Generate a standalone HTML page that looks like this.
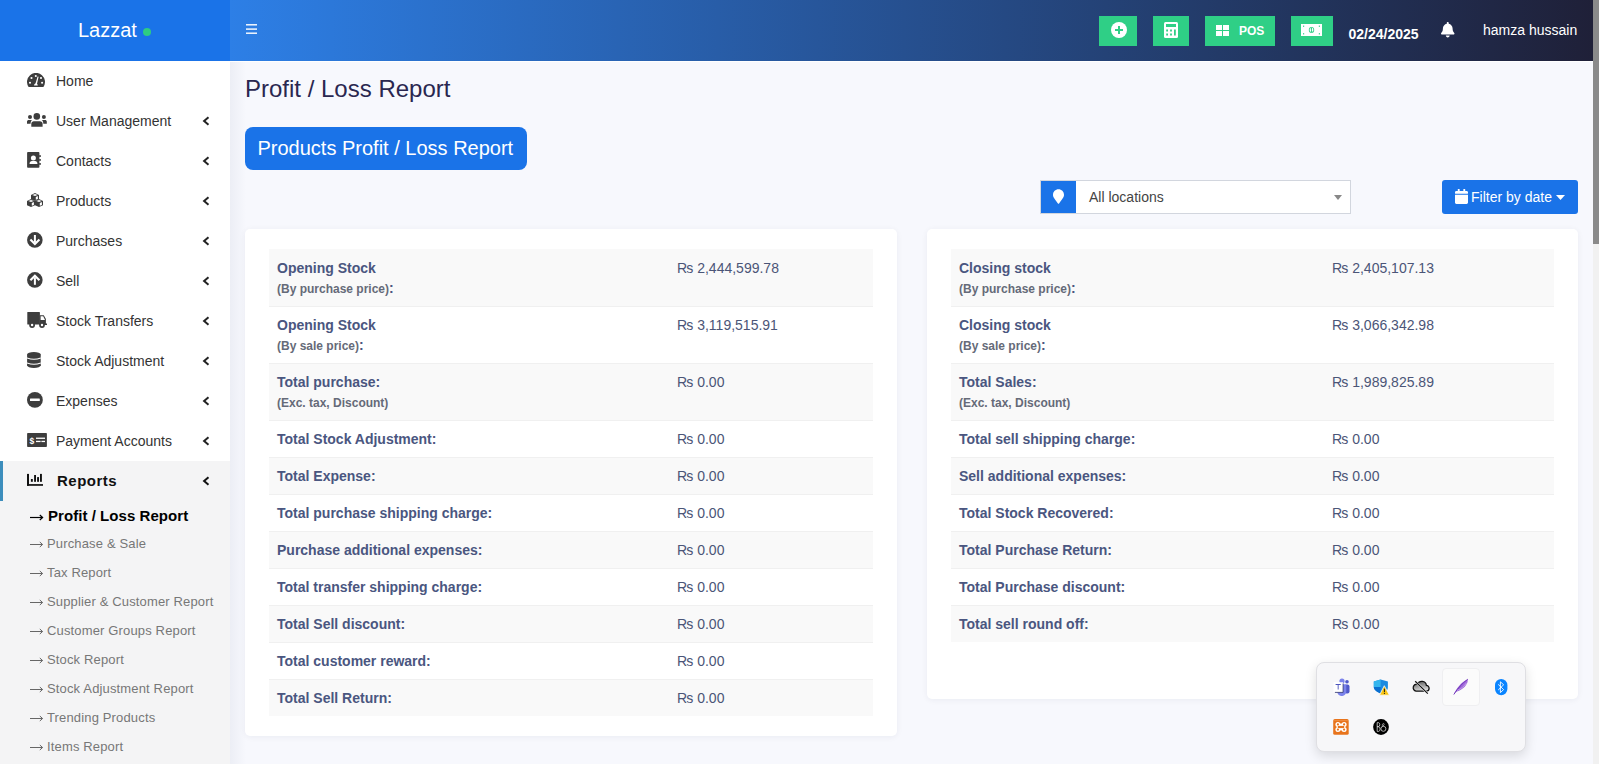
<!DOCTYPE html>
<html><head><meta charset="utf-8">
<style>
*{box-sizing:border-box;margin:0;padding:0}
html,body{width:1599px;height:764px;overflow:hidden;background:#f7f8fd;font-family:"Liberation Sans",sans-serif}
.a{position:absolute}
#logo{left:0;top:0;width:230px;height:61px;background:#1a73e8}
#nav{left:230px;top:0;width:1363px;height:61px;background:linear-gradient(to right,#2d7fe6,#1f2038)}
#wline{left:0;top:61px;width:1593px;height:1px;background:#fff}
#side{left:0;top:62px;width:230px;height:703px;background:#fff}
#shadow{left:230px;top:62px;width:16px;height:702px;background:linear-gradient(to right,#eceef5,rgba(247,248,253,0))}
.gbtn{background:#2fcf86;top:16px;height:30px}
.mi{left:56px;height:40px;line-height:40px;font-size:14px;color:#333;white-space:nowrap}
.ic{left:27px}
.chev{left:203px}
.sub{left:30px;font-size:13px;line-height:20px;color:#777;white-space:nowrap}
#sb{left:1593px;top:0;width:6px;height:764px;background:#f1f1f1}
#thumb{left:1593px;top:0;width:6px;height:244px;background:#8a8a8a}
.card{background:#fff;border-radius:5px;box-shadow:0 1px 6px rgba(20,30,60,.06)}
.row{height:37px}
.row.g{background:#f9f9f9}
.lbl{font-size:14px;font-weight:bold;color:#4a5680;line-height:20px;white-space:nowrap}
.val{font-size:14px;color:#4b5577;line-height:20px;white-space:nowrap}
.bd{border-top:1px solid #f0f0f0}
</style></head><body>
<div class="a" id="logo"></div>
<div class="a" style="left:78px;top:18px;font-size:20px;line-height:24px;color:#fff">Lazzat</div>
<div class="a" style="left:143px;top:28px;width:8px;height:8px;border-radius:50%;background:#2ecc82"></div>
<div class="a" id="nav"></div>
<div class="a" id="wline"></div>
<div class="a" id="side"></div>
<div class="a" id="shadow"></div>

<!-- hamburger -->
<svg class="a" style="left:246px;top:23px" width="12" height="12"><rect x="0" y="1.1" width="11" height="1.4" fill="#fff"/><rect x="0" y="5.4" width="11" height="1.4" fill="#fff"/><rect x="0" y="9.5" width="11" height="1.4" fill="#fff"/></svg>

<!-- header buttons -->
<div class="a gbtn" style="left:1099px;width:38px"></div>
<svg class="a" style="left:1110.5px;top:22px" width="16" height="16" viewBox="0 0 16 16"><circle cx="8" cy="8" r="8" fill="#fff"/><rect x="4" y="7" width="8" height="2" fill="#2fcf86"/><rect x="7" y="4" width="2" height="8" fill="#2fcf86"/></svg>
<div class="a gbtn" style="left:1153px;width:36px"></div>
<svg class="a" style="left:1164px;top:22px" width="14" height="16" viewBox="0 0 14 16"><rect x="0" y="0" width="14" height="16" rx="1.5" fill="#fff"/><rect x="2" y="2" width="10" height="3" fill="#2fcf86"/><rect x="2.2" y="7.5" width="1.8" height="2" fill="#2fcf86"/><rect x="6.1" y="7.5" width="1.8" height="2" fill="#2fcf86"/><rect x="2.2" y="11.5" width="1.8" height="2" fill="#2fcf86"/><rect x="6.1" y="11.5" width="1.8" height="2" fill="#2fcf86"/><rect x="10" y="7.5" width="1.8" height="6" fill="#2fcf86"/></svg>
<div class="a gbtn" style="left:1205px;width:70px"></div>
<svg class="a" style="left:1216px;top:25px" width="13" height="11"><rect x="0" y="0" width="6" height="5" fill="#fff"/><rect x="7" y="0" width="6" height="5" fill="#fff"/><rect x="0" y="6" width="6" height="5" fill="#fff"/><rect x="7" y="6" width="6" height="5" fill="#fff"/></svg>
<div class="a" style="left:1239px;top:23px;font-size:12px;line-height:16px;font-weight:bold;color:#fff">POS</div>
<div class="a gbtn" style="left:1291px;width:42px"></div>
<svg class="a" style="left:1301px;top:24px" width="21" height="12" viewBox="0 0 21 12"><rect x="0" y="0" width="21" height="12" fill="#fff"/><ellipse cx="10.5" cy="6" rx="2.7" ry="3" fill="#2fcf86"/><ellipse cx="10.5" cy="6" rx="1.9" ry="2.2" fill="#fff"/><path d="M10.1 4.1H11V7.2H11.6V7.9H9.6V7.2H10.1V5.1L9.6 5.4V4.7Z" fill="#2fcf86"/><rect x="2" y="1.6" width="1.2" height="1.2" fill="#2fcf86"/><rect x="17.8" y="1.6" width="1.2" height="1.2" fill="#2fcf86"/><rect x="2" y="9.2" width="1.2" height="1.2" fill="#2fcf86"/><rect x="17.8" y="9.2" width="1.2" height="1.2" fill="#2fcf86"/></svg>
<div class="a" style="left:1348.5px;top:24px;font-size:14px;line-height:20px;font-weight:bold;color:#fff">02/24/2025</div>
<svg class="a" style="left:1441px;top:22px" width="13.5" height="15.5" viewBox="0 0 448 512"><path fill="#fff" d="M224 512c35.32 0 63.97-28.65 63.97-64H160.03c0 35.35 28.65 64 63.97 64zm215.39-149.71c-19.32-20.76-55.47-51.99-55.47-154.29 0-77.7-54.48-139.9-127.94-155.16V32c0-17.67-14.32-32-31.98-32s-31.98 14.33-31.98 32v20.84C118.56 68.1 64.08 130.3 64.08 208c0 102.3-36.15 133.53-55.47 154.29-6 6.45-8.66 14.16-8.61 21.71.11 16.4 12.98 32 32.1 32h383.8c19.12 0 32-15.6 32.1-32 .05-7.55-2.61-15.27-8.61-21.71z"/></svg>
<div class="a" style="left:1483px;top:20px;font-size:14px;line-height:20px;color:#fff">hamza hussain</div>

<!-- content title -->
<div class="a" style="left:245px;top:74px;font-size:24px;line-height:30px;color:#2a2750;white-space:nowrap">Profit / Loss Report</div>
<div class="a" style="left:245px;top:127px;width:282px;height:43px;border-radius:8px;background:#1a73e8"></div>
<div class="a" style="left:257.5px;top:127px;font-size:20px;line-height:43px;color:#fff;white-space:nowrap">Products Profit / Loss Report</div>

<!-- location select -->
<div class="a" style="left:1040px;top:180px;width:311px;height:34px;border:1px solid #d2d6de;background:#fff"></div>
<div class="a" style="left:1041px;top:181px;width:35px;height:32px;background:#1a73e8"></div>
<svg class="a" style="left:1053px;top:189px" width="11" height="15" viewBox="0 0 384 512"><path fill="#fff" d="M172.268 501.67C26.97 291.031 0 269.413 0 192 0 85.961 85.961 0 192 0s192 85.961 192 192c0 77.413-26.97 99.031-172.268 309.67-9.535 13.774-29.93 13.773-39.464 0z"/></svg>
<div class="a" style="left:1089px;top:187px;font-size:14px;line-height:20px;color:#444;white-space:nowrap">All locations</div>
<svg class="a" style="left:1334px;top:195px" width="8" height="5"><path d="M0 0H8L4 5Z" fill="#888"/></svg>

<!-- filter by date -->
<div class="a" style="left:1442px;top:180px;width:136px;height:34px;border-radius:3px;background:#1a73e8"></div>
<svg class="a" style="left:1455px;top:189px" width="13" height="15" viewBox="0 0 448 512"><path fill="#fff" d="M12 192h424c6.6 0 12 5.4 12 12v260c0 26.5-21.5 48-48 48H48c-26.5 0-48-21.5-48-48V204c0-6.6 5.4-12 12-12zm436-44v-36c0-26.5-21.5-48-48-48h-48V12c0-6.6-5.4-12-12-12h-40c-6.6 0-12 5.4-12 12v52H160V12c0-6.6-5.4-12-12-12h-40c-6.6 0-12 5.4-12 12v52H48C21.5 64 0 85.5 0 112v36c0 6.6 5.4 12 12 12h424c6.6 0 12-5.4 12-12z"/></svg>
<div class="a" style="left:1471px;top:187px;font-size:14px;line-height:20px;color:#fff;white-space:nowrap">Filter by date</div>
<svg class="a" style="left:1556px;top:195px" width="9" height="5"><path d="M0 0H9L4.5 5Z" fill="#fff"/></svg>

<div class="a mi" style="top:61px">Home</div>
<svg class="a" style="left:27px;top:73px" width="18" height="14" viewBox="0 0 18 14" preserveAspectRatio="none"><path fill="#3d3d3d" d="M1.6 14A9 9 0 1 1 16.4 14Z"/><circle cx="4.5" cy="5" r="1.05" fill="#fff"/><circle cx="8.8" cy="3" r="1.05" fill="#fff"/><circle cx="14" cy="5" r="1.05" fill="#fff"/><circle cx="3" cy="9.8" r="1.05" fill="#fff"/><circle cx="15.1" cy="9.8" r="1.05" fill="#fff"/><path d="M8.2 11.5L10.6 3.4 11.6 3.7 9.8 11.8Z" fill="#fff"/><path d="M7 12.5a1.9 1.9 0 0 1 3.8 0Z" fill="#fff"/></svg>
<div class="a mi" style="top:101px">User Management</div>
<svg class="a" style="left:27px;top:112px" width="20" height="15" viewBox="0 0 20 15" preserveAspectRatio="none"><circle cx="9.8" cy="4.4" r="3.3" fill="#3d3d3d"/><circle cx="3" cy="4.9" r="2" fill="#3d3d3d"/><circle cx="16.9" cy="4.9" r="2" fill="#3d3d3d"/><path fill="#3d3d3d" d="M4.3 14.8V11.8C4.3 10.3 5.4 9.3 6.9 9.3H12.9C14.4 9.3 15.6 10.3 15.6 11.8V14.8Z"/><path fill="#3d3d3d" d="M0 11.7V9.6C0 8.6 .8 7.9 1.8 7.9H4.9C4.2 8.8 3.6 10 3.6 11.7Z"/><path fill="#3d3d3d" d="M19.8 11.7V9.6C19.8 8.6 19 7.9 18 7.9H15C15.7 8.8 16.3 10 16.3 11.7Z"/></svg>
<svg class="a" style="left:202px;top:115.5px" width="8" height="10" viewBox="0 0 8 10"><path d="M6.5 1.2L2.1 5 6.5 8.8" stroke="#222" stroke-width="2" fill="none"/></svg>
<div class="a mi" style="top:141px">Contacts</div>
<svg class="a" style="left:27px;top:152px" width="14" height="16" viewBox="0 0 14 16" preserveAspectRatio="none"><rect x="0.1" y="0.1" width="12.3" height="15.7" rx="0.8" fill="#3d3d3d"/><rect x="12" y="3.3" width="2" height="1.5" fill="#3d3d3d"/><rect x="12" y="7.2" width="2" height="1.5" fill="#3d3d3d"/><rect x="12" y="11.2" width="2" height="1.5" fill="#3d3d3d"/><circle cx="6.4" cy="5.9" r="2.5" fill="#fff"/><path d="M2.6 12.1V11.3C2.6 10 3.6 9 4.9 9H8.1C9.4 9 10.4 10 10.4 11.3V12.1Z" fill="#fff"/></svg>
<svg class="a" style="left:202px;top:155.5px" width="8" height="10" viewBox="0 0 8 10"><path d="M6.5 1.2L2.1 5 6.5 8.8" stroke="#222" stroke-width="2" fill="none"/></svg>
<div class="a mi" style="top:181px">Products</div>
<svg class="a" style="left:27px;top:193px" width="16" height="14" viewBox="0 0 16 14" preserveAspectRatio="none"><path fill="#3d3d3d" d="M4 2L8 0L12 2V6.3L8 8L4 6.3Z"/><path fill="#fff" d="M5.3 2L8 1L10.7 2L8 3Z"/><path fill="#fff" d="M8.8 3.9L10.9 3.1V5.9L8.8 6.8Z"/><path fill="#3d3d3d" d="M0 8L4 6L8 8V12.3L4 14L0 12.3Z"/><path fill="#fff" d="M1.3 8L4 7L6.7 8L4 9Z"/><path fill="#fff" d="M4.8 9.9L6.9 9.1V11.9L4.8 12.8Z"/><path fill="#3d3d3d" d="M8 8L12 6L16 8V12.3L12 14L8 12.3Z"/><path fill="#fff" d="M9.3 8L12 7L14.7 8L12 9Z"/><path fill="#fff" d="M12.8 9.9L14.9 9.1V11.9L12.8 12.8Z"/></svg>
<svg class="a" style="left:202px;top:195.5px" width="8" height="10" viewBox="0 0 8 10"><path d="M6.5 1.2L2.1 5 6.5 8.8" stroke="#222" stroke-width="2" fill="none"/></svg>
<div class="a mi" style="top:221px">Purchases</div>
<svg class="a" style="left:27px;top:232px" width="16" height="16" viewBox="0 0 16 16" preserveAspectRatio="none"><circle cx="7.85" cy="7.9" r="7.8" fill="#3d3d3d"/><rect x="6.9" y="3" width="2" height="7.5" fill="#fff"/><path d="M3.4 7.6L7.9 12.1 12.4 7.6" stroke="#fff" stroke-width="2.1" fill="none"/></svg>
<svg class="a" style="left:202px;top:235.5px" width="8" height="10" viewBox="0 0 8 10"><path d="M6.5 1.2L2.1 5 6.5 8.8" stroke="#222" stroke-width="2" fill="none"/></svg>
<div class="a mi" style="top:261px">Sell</div>
<svg class="a" style="left:27px;top:272px" width="16" height="16" viewBox="0 0 16 16" preserveAspectRatio="none"><circle cx="7.85" cy="7.9" r="7.8" fill="#3d3d3d"/><rect x="6.9" y="5.3" width="2" height="7.5" fill="#fff"/><path d="M3.4 8.2L7.9 3.7 12.4 8.2" stroke="#fff" stroke-width="2.1" fill="none"/></svg>
<svg class="a" style="left:202px;top:275.5px" width="8" height="10" viewBox="0 0 8 10"><path d="M6.5 1.2L2.1 5 6.5 8.8" stroke="#222" stroke-width="2" fill="none"/></svg>
<div class="a mi" style="top:301px">Stock Transfers</div>
<svg class="a" style="left:27px;top:311px" width="20" height="17" viewBox="0 0 20 17" preserveAspectRatio="none"><rect x="0.3" y="1" width="12.6" height="12.5" rx="0.5" fill="#3d3d3d"/><path fill="#3d3d3d" d="M12.5 4.2H16.8L18.9 8V12.5H20V14H12.5Z"/><path fill="#fff" d="M13.6 5.3H16.2L18 8.9H13.6Z"/><circle cx="5.1" cy="14" r="2.9" fill="#3d3d3d"/><circle cx="15" cy="14" r="2.9" fill="#3d3d3d"/><circle cx="5.1" cy="14" r="1.2" fill="#fff"/><circle cx="15" cy="14" r="1.2" fill="#fff"/></svg>
<svg class="a" style="left:202px;top:315.5px" width="8" height="10" viewBox="0 0 8 10"><path d="M6.5 1.2L2.1 5 6.5 8.8" stroke="#222" stroke-width="2" fill="none"/></svg>
<div class="a mi" style="top:341px">Stock Adjustment</div>
<svg class="a" style="left:27px;top:352px" width="14" height="16" viewBox="0 0 14 16" preserveAspectRatio="none"><ellipse cx="6.9" cy="2.6" rx="6.8" ry="2.6" fill="#3d3d3d"/><rect x="0.1" y="2.6" width="13.6" height="10.8" fill="#3d3d3d"/><ellipse cx="6.9" cy="13.3" rx="6.8" ry="2.6" fill="#3d3d3d"/><path d="M0 5.9Q6.9 8.6 13.8 5.9" stroke="#fff" stroke-width="1.1" fill="none"/><path d="M0 10.9Q6.9 13.6 13.8 10.9" stroke="#fff" stroke-width="1.1" fill="none"/></svg>
<svg class="a" style="left:202px;top:355.5px" width="8" height="10" viewBox="0 0 8 10"><path d="M6.5 1.2L2.1 5 6.5 8.8" stroke="#222" stroke-width="2" fill="none"/></svg>
<div class="a mi" style="top:381px">Expenses</div>
<svg class="a" style="left:27px;top:392px" width="16" height="16" viewBox="0 0 16 16" preserveAspectRatio="none"><circle cx="7.9" cy="7.9" r="7.9" fill="#3d3d3d"/><rect x="3" y="6.6" width="9.8" height="2.5" rx="0.4" fill="#fff"/></svg>
<svg class="a" style="left:202px;top:395.5px" width="8" height="10" viewBox="0 0 8 10"><path d="M6.5 1.2L2.1 5 6.5 8.8" stroke="#222" stroke-width="2" fill="none"/></svg>
<div class="a mi" style="top:421px">Payment Accounts</div>
<svg class="a" style="left:27px;top:433px" width="20" height="14" viewBox="0 0 20 14" preserveAspectRatio="none"><rect x="0.1" y="0" width="19.8" height="14" rx="0.8" fill="#3d3d3d"/><text x="2.6" y="10.6" font-size="8.5" font-family="Liberation Sans" font-weight="bold" fill="#fff">$</text><rect x="9" y="4.6" width="9" height="1.3" fill="#fff"/><rect x="9" y="7.8" width="4.6" height="1.3" fill="#fff"/><rect x="14.4" y="7.8" width="3.6" height="1.3" fill="#fff"/></svg>
<svg class="a" style="left:202px;top:435.5px" width="8" height="10" viewBox="0 0 8 10"><path d="M6.5 1.2L2.1 5 6.5 8.8" stroke="#222" stroke-width="2" fill="none"/></svg>
<div class="a" style="left:0;top:461px;width:230px;height:303px;background:#f4f4f5"></div>
<div class="a" style="left:0;top:461px;width:3px;height:40px;background:#3c8dbc"></div>
<div class="a mi" style="left:57px;top:461px;font-weight:bold;font-size:15px;color:#111;letter-spacing:.5px">Reports</div>
<svg class="a" style="left:27px;top:473px" width="16" height="13" viewBox="0 0 16 13" preserveAspectRatio="none"><rect x="0" y="0.9" width="2" height="11.8" fill="#111"/><rect x="0" y="11.1" width="16" height="1.7" fill="#111"/><rect x="3.9" y="6" width="1.9" height="2.8" fill="#111"/><rect x="7.1" y="2" width="1.9" height="6.8" fill="#111"/><rect x="10.1" y="4.1" width="1.9" height="4.7" fill="#111"/><rect x="13" y="0.9" width="1.9" height="7.9" fill="#111"/></svg>
<svg class="a" style="left:202px;top:475.7px" width="8" height="10" viewBox="0 0 8 10"><path d="M6.5 1.2L2.1 5 6.5 8.8" stroke="#111" stroke-width="2" fill="none"/></svg>
<div class="a sub" style="left:48px;top:506px;font-size:15px;font-weight:bold;color:#000;letter-spacing:.05px">Profit / Loss Report</div>
<svg class="a" style="left:29px;top:513px" width="15" height="9" viewBox="0 0 15 9"><path d="M1 4.5H13.4" stroke="#000" stroke-width="1.2"/><path d="M10.8 2L13.6 4.5 10.8 7" stroke="#000" stroke-width="1.2" fill="none"/></svg>
<div class="a sub" style="left:47px;top:534px;letter-spacing:.15px">Purchase &amp; Sale</div>
<svg class="a" style="left:29px;top:540px" width="15" height="9" viewBox="0 0 15 9"><path d="M1 4.5H13.4" stroke="#666" stroke-width="1"/><path d="M10.8 2L13.6 4.5 10.8 7" stroke="#666" stroke-width="1" fill="none"/></svg>
<div class="a sub" style="left:47px;top:563px;letter-spacing:.15px">Tax Report</div>
<svg class="a" style="left:29px;top:569px" width="15" height="9" viewBox="0 0 15 9"><path d="M1 4.5H13.4" stroke="#666" stroke-width="1"/><path d="M10.8 2L13.6 4.5 10.8 7" stroke="#666" stroke-width="1" fill="none"/></svg>
<div class="a sub" style="left:47px;top:591.5px;letter-spacing:.15px">Supplier &amp; Customer Report</div>
<svg class="a" style="left:29px;top:598px" width="15" height="9" viewBox="0 0 15 9"><path d="M1 4.5H13.4" stroke="#666" stroke-width="1"/><path d="M10.8 2L13.6 4.5 10.8 7" stroke="#666" stroke-width="1" fill="none"/></svg>
<div class="a sub" style="left:47px;top:620.5px;letter-spacing:.15px">Customer Groups Report</div>
<svg class="a" style="left:29px;top:627px" width="15" height="9" viewBox="0 0 15 9"><path d="M1 4.5H13.4" stroke="#666" stroke-width="1"/><path d="M10.8 2L13.6 4.5 10.8 7" stroke="#666" stroke-width="1" fill="none"/></svg>
<div class="a sub" style="left:47px;top:649.5px;letter-spacing:.15px">Stock Report</div>
<svg class="a" style="left:29px;top:656px" width="15" height="9" viewBox="0 0 15 9"><path d="M1 4.5H13.4" stroke="#666" stroke-width="1"/><path d="M10.8 2L13.6 4.5 10.8 7" stroke="#666" stroke-width="1" fill="none"/></svg>
<div class="a sub" style="left:47px;top:678.5px;letter-spacing:.15px">Stock Adjustment Report</div>
<svg class="a" style="left:29px;top:685px" width="15" height="9" viewBox="0 0 15 9"><path d="M1 4.5H13.4" stroke="#666" stroke-width="1"/><path d="M10.8 2L13.6 4.5 10.8 7" stroke="#666" stroke-width="1" fill="none"/></svg>
<div class="a sub" style="left:47px;top:707.5px;letter-spacing:.15px">Trending Products</div>
<svg class="a" style="left:29px;top:714px" width="15" height="9" viewBox="0 0 15 9"><path d="M1 4.5H13.4" stroke="#666" stroke-width="1"/><path d="M10.8 2L13.6 4.5 10.8 7" stroke="#666" stroke-width="1" fill="none"/></svg>
<div class="a sub" style="left:47px;top:736.5px;letter-spacing:.15px">Items Report</div>
<svg class="a" style="left:29px;top:743px" width="15" height="9" viewBox="0 0 15 9"><path d="M1 4.5H13.4" stroke="#666" stroke-width="1"/><path d="M10.8 2L13.6 4.5 10.8 7" stroke="#666" stroke-width="1" fill="none"/></svg>
<div class="a card" style="left:245px;top:229px;width:652px;height:507px"></div><div class="a row g" style="left:269px;top:249px;width:604px;height:57px"></div><div class="a lbl" style="left:277px;top:258px">Opening Stock<br><span style="font-size:12px;color:#656a78">(By purchase price)</span>:</div><div class="a val" style="left:677px;top:258px">&#8360; 2,444,599.78</div><div class="a row bd" style="left:269px;top:306px;width:604px;height:57px"></div><div class="a lbl" style="left:277px;top:315px">Opening Stock<br><span style="font-size:12px;color:#656a78">(By sale price)</span>:</div><div class="a val" style="left:677px;top:315px">&#8360; 3,119,515.91</div><div class="a row g bd" style="left:269px;top:363px;width:604px;height:57px"></div><div class="a lbl" style="left:277px;top:372px">Total purchase:<br><span style="font-size:12px;color:#656a78">(Exc. tax, Discount)</span></div><div class="a val" style="left:677px;top:372px">&#8360; 0.00</div><div class="a row bd" style="left:269px;top:420px;width:604px;height:37px"></div><div class="a lbl" style="left:277px;top:429px">Total Stock Adjustment:</div><div class="a val" style="left:677px;top:429px">&#8360; 0.00</div><div class="a row g bd" style="left:269px;top:457px;width:604px;height:37px"></div><div class="a lbl" style="left:277px;top:466px">Total Expense:</div><div class="a val" style="left:677px;top:466px">&#8360; 0.00</div><div class="a row bd" style="left:269px;top:494px;width:604px;height:37px"></div><div class="a lbl" style="left:277px;top:503px">Total purchase shipping charge:</div><div class="a val" style="left:677px;top:503px">&#8360; 0.00</div><div class="a row g bd" style="left:269px;top:531px;width:604px;height:37px"></div><div class="a lbl" style="left:277px;top:540px">Purchase additional expenses:</div><div class="a val" style="left:677px;top:540px">&#8360; 0.00</div><div class="a row bd" style="left:269px;top:568px;width:604px;height:37px"></div><div class="a lbl" style="left:277px;top:577px">Total transfer shipping charge:</div><div class="a val" style="left:677px;top:577px">&#8360; 0.00</div><div class="a row g bd" style="left:269px;top:605px;width:604px;height:37px"></div><div class="a lbl" style="left:277px;top:614px">Total Sell discount:</div><div class="a val" style="left:677px;top:614px">&#8360; 0.00</div><div class="a row bd" style="left:269px;top:642px;width:604px;height:37px"></div><div class="a lbl" style="left:277px;top:651px">Total customer reward:</div><div class="a val" style="left:677px;top:651px">&#8360; 0.00</div><div class="a row g bd" style="left:269px;top:679px;width:604px;height:37px"></div><div class="a lbl" style="left:277px;top:688px">Total Sell Return:</div><div class="a val" style="left:677px;top:688px">&#8360; 0.00</div>
<div class="a card" style="left:927px;top:229px;width:651px;height:470px"></div><div class="a row g" style="left:951px;top:249px;width:603px;height:57px"></div><div class="a lbl" style="left:959px;top:258px">Closing stock<br><span style="font-size:12px;color:#656a78">(By purchase price)</span>:</div><div class="a val" style="left:1332px;top:258px">&#8360; 2,405,107.13</div><div class="a row bd" style="left:951px;top:306px;width:603px;height:57px"></div><div class="a lbl" style="left:959px;top:315px">Closing stock<br><span style="font-size:12px;color:#656a78">(By sale price)</span>:</div><div class="a val" style="left:1332px;top:315px">&#8360; 3,066,342.98</div><div class="a row g bd" style="left:951px;top:363px;width:603px;height:57px"></div><div class="a lbl" style="left:959px;top:372px">Total Sales:<br><span style="font-size:12px;color:#656a78">(Exc. tax, Discount)</span></div><div class="a val" style="left:1332px;top:372px">&#8360; 1,989,825.89</div><div class="a row bd" style="left:951px;top:420px;width:603px;height:37px"></div><div class="a lbl" style="left:959px;top:429px">Total sell shipping charge:</div><div class="a val" style="left:1332px;top:429px">&#8360; 0.00</div><div class="a row g bd" style="left:951px;top:457px;width:603px;height:37px"></div><div class="a lbl" style="left:959px;top:466px">Sell additional expenses:</div><div class="a val" style="left:1332px;top:466px">&#8360; 0.00</div><div class="a row bd" style="left:951px;top:494px;width:603px;height:37px"></div><div class="a lbl" style="left:959px;top:503px">Total Stock Recovered:</div><div class="a val" style="left:1332px;top:503px">&#8360; 0.00</div><div class="a row g bd" style="left:951px;top:531px;width:603px;height:37px"></div><div class="a lbl" style="left:959px;top:540px">Total Purchase Return:</div><div class="a val" style="left:1332px;top:540px">&#8360; 0.00</div><div class="a row bd" style="left:951px;top:568px;width:603px;height:37px"></div><div class="a lbl" style="left:959px;top:577px">Total Purchase discount:</div><div class="a val" style="left:1332px;top:577px">&#8360; 0.00</div><div class="a row g bd" style="left:951px;top:605px;width:603px;height:37px"></div><div class="a lbl" style="left:959px;top:614px">Total sell round off:</div><div class="a val" style="left:1332px;top:614px">&#8360; 0.00</div>
<div class="a" style="left:1316px;top:662px;width:210px;height:90px;border-radius:8px;background:#f7f7f9;border:1px solid #dfdfe3;box-shadow:0 4px 12px rgba(0,0,0,.13)"></div><div class="a" style="left:1442px;top:668px;width:38px;height:38px;border-radius:4px;background:#fbfbfb;border:1px solid #efeff1"></div><svg class="a" style="left:1333px;top:678px" width="17" height="18" viewBox="0 0 17 18"><circle cx="14" cy="3.8" r="1.8" fill="#5059c9"/><rect x="11.5" y="6.6" width="5" height="9" rx="2" fill="#5059c9"/><circle cx="9" cy="3" r="2.6" fill="#7b83eb"/><path d="M4.2 6.3H13.3V13.5A4.5 4.5 0 0 1 4.2 13.5Z" fill="#7b83eb"/><rect x="0.5" y="4.2" width="9.6" height="10.2" rx="0.5" fill="#fff"/><path d="M10.1 5.5V14.4H1.9" stroke="#2b2f6e" stroke-width="0.8" fill="none"/><path d="M2.6 6.1H7.7V7H5.6V11.6H4.7V7H2.6Z" fill="#4b53bc"/></svg><svg class="a" style="left:1373px;top:679px" width="17" height="17" viewBox="0 0 17 17"><path d="M7.6 0.5L14.9 2.5V8.5C14.9 11.5 12 13.3 8.5 14.5 4.1 13 0.8 11 0.8 8V2.5Z" fill="#1a8ae0"/><path d="M7.6 0.5L0.8 2.5V8H7.6Z" fill="#35b6ee"/><path d="M0.8 8C0.8 11 4 13.2 7.6 14.4V8Z" fill="#0a6fd0"/><path d="M11.3 6.7L16.4 16.2H6.5Z" fill="#f9c513" stroke="#f9f9fb" stroke-width="0.8"/><rect x="10.9" y="9.6" width="1" height="3.6" fill="#1a1a1a"/><rect x="10.9" y="14" width="1" height="1" fill="#1a1a1a"/></svg><svg class="a" style="left:1412px;top:680px" width="18" height="15" viewBox="0 0 18 15"><defs><linearGradient id="cg" x1="0" y1="0" x2="0.3" y2="1"><stop offset="0" stop-color="#555"/><stop offset="1" stop-color="#d8d8d8"/></linearGradient></defs><path d="M4 11.2H14a2.9 2.9 0 0 0 .4-5.8A4.6 4.6 0 0 0 5.6 4.2 3.5 3.5 0 0 0 4 11.2Z" fill="url(#cg)" stroke="#111" stroke-width="1.3"/><path d="M3.2 1.2L15.8 13.6" stroke="#f6f6f8" stroke-width="2.2"/><path d="M3.2 1.2L15.8 13.6" stroke="#111" stroke-width="1.2"/></svg><svg class="a" style="left:1453px;top:678px" width="16" height="18" viewBox="0 0 16 18"><defs><linearGradient id="fg" x1="0" y1="1" x2="1" y2="0"><stop offset="0" stop-color="#7d3fc8"/><stop offset="1" stop-color="#9a5ad8"/></linearGradient></defs><path d="M0.8 16.5C3 11 8 4 14.8 1.2 15.5 6 10 12 3 13.8Z" fill="url(#fg)" opacity=".85"/><path d="M0.8 16.5C5 10 9 5.5 14.8 1.2" stroke="#6a2db8" stroke-width="0.9" fill="none"/><path d="M4 12.5C8 11 11.5 8 13.5 5" stroke="#c7a6ee" stroke-width="0.8" fill="none"/></svg><svg class="a" style="left:1495px;top:679px" width="13" height="17" viewBox="0 0 13 17"><rect x="0" y="0" width="12.4" height="16.3" rx="6.2" fill="#0a84ff"/><path d="M3.2 5.4L8.6 10.6 5.4 13.6V2.8L8.6 5.8 3.2 11" stroke="#fff" stroke-width="0.9" fill="none"/></svg><svg class="a" style="left:1333px;top:719px" width="16" height="16" viewBox="0 0 16 16"><rect x="0.2" y="0.1" width="15.5" height="15.7" rx="1.6" fill="#e8741c"/><rect x="1.2" y="1" width="13.5" height="0.6" fill="#f59a50"/><g fill="#fff"><circle cx="4.9" cy="5.4" r="2.5"/><circle cx="11.1" cy="5.4" r="2.5"/><circle cx="4.9" cy="10.6" r="2.5"/><circle cx="11.1" cy="10.6" r="2.5"/><rect x="4.9" y="4.6" width="6.2" height="6.8"/></g><g fill="#e8741c"><circle cx="4.9" cy="5.4" r="1.1"/><circle cx="11.1" cy="5.4" r="1.1"/><circle cx="4.9" cy="10.6" r="1.1"/><circle cx="11.1" cy="10.6" r="1.1"/><rect x="4.9" y="6.9" width="6.2" height="2.2"/></g></svg><svg class="a" style="left:1373px;top:719px" width="16" height="16" viewBox="0 0 16 16"><circle cx="8" cy="8" r="7.9" fill="#000"/><path d="M4.2 3.6V12.4M4.2 3.6H5.4C7.2 3.6 7.2 7.7 5.4 7.7H4.2M4.2 7.7H5.6C7.6 7.7 7.6 12.4 5.6 12.4H4.2" stroke="#e6e6e6" stroke-width="0.75" fill="none"/><circle cx="10.4" cy="9.8" r="2.5" stroke="#e6e6e6" stroke-width="0.75" fill="none"/><path d="M9.6 7.2C9.1 6.5 9.3 4.7 10.3 4.5 11.2 4.4 11.4 5.3 10.9 6L9.8 7.4" stroke="#cfcfcf" stroke-width="0.7" fill="none"/></svg>

<div class="a" id="sb"></div>
<div class="a" id="thumb"></div>
</body></html>
